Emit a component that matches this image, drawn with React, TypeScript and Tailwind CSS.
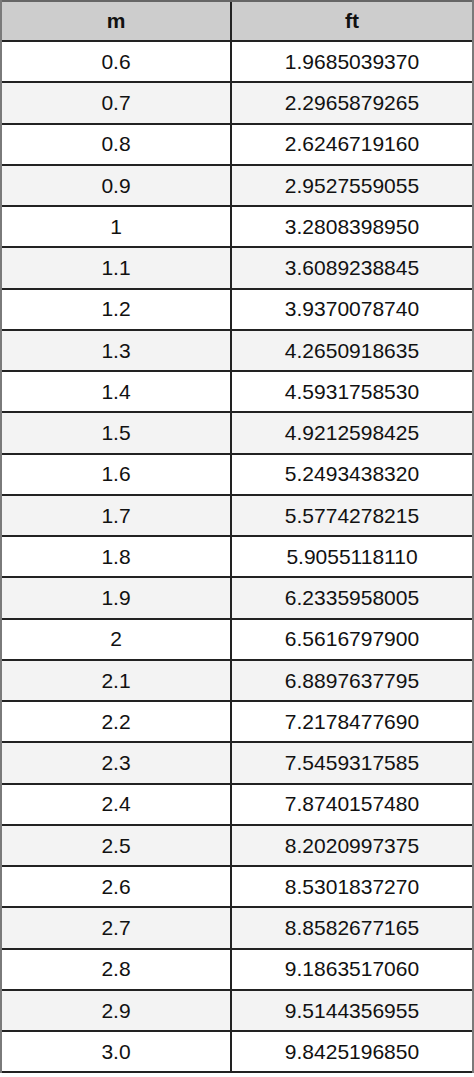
const rows: [string, string][] = [
  ["0.6", "1.9685039370"],
  ["0.7", "2.2965879265"],
  ["0.8", "2.6246719160"],
  ["0.9", "2.9527559055"],
  ["1", "3.2808398950"],
  ["1.1", "3.6089238845"],
  ["1.2", "3.9370078740"],
  ["1.3", "4.2650918635"],
  ["1.4", "4.5931758530"],
  ["1.5", "4.9212598425"],
  ["1.6", "5.2493438320"],
  ["1.7", "5.5774278215"],
  ["1.8", "5.9055118110"],
  ["1.9", "6.2335958005"],
  ["2", "6.5616797900"],
  ["2.1", "6.8897637795"],
  ["2.2", "7.2178477690"],
  ["2.3", "7.5459317585"],
  ["2.4", "7.8740157480"],
  ["2.5", "8.2020997375"],
  ["2.6", "8.5301837270"],
  ["2.7", "8.8582677165"],
  ["2.8", "9.1863517060"],
  ["2.9", "9.5144356955"],
  ["3.0", "9.8425196850"],
];

export default function App() {
  return (
    <div className="w-[474px] h-[1077px] bg-white font-['Liberation_Sans',Arial,sans-serif] text-[21px] text-[#111]">
      <div className="border-l-2 border-r-2 border-[#7a7a7a]">
        {/* header */}
        <div className="grid grid-cols-[230px_1fr] h-[42px] bg-[#cdcdcd] border-t-2 border-b-2 border-t-[#666] border-b-[#222]">
          <div className="flex items-center justify-center font-bold border-r-2 border-[#222]">m</div>
          <div className="flex items-center justify-center font-bold">ft</div>
        </div>
        {rows.map(([m, ft], i) => (
          <div
            key={m}
            className={`grid grid-cols-[230px_1fr] h-[41.25px] border-b-2 border-[#222] ${
              i % 2 === 1 ? "bg-[#f3f3f3]" : "bg-white"
            }`}
          >
            <div className="flex items-center justify-center border-r-2 border-[#222]">{m}</div>
            <div className="flex items-center justify-center">{ft}</div>
          </div>
        ))}
      </div>
    </div>
  );
}
